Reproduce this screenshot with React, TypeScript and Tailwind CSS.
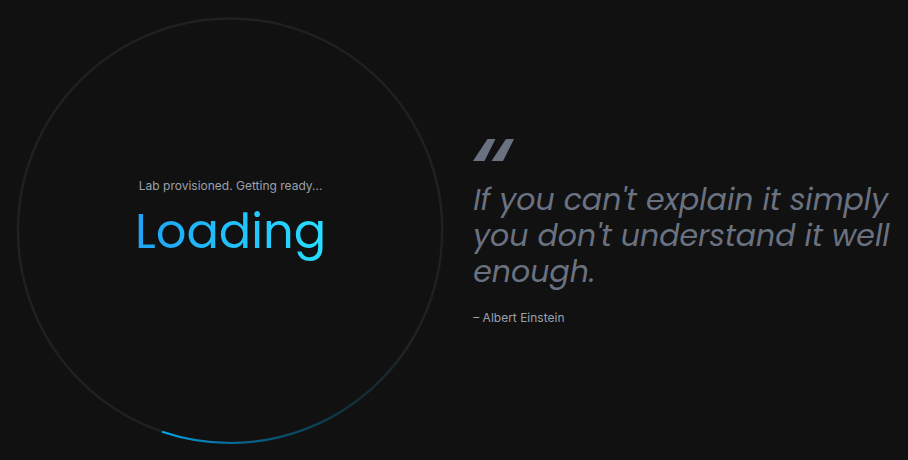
function ProgressRing() {
  return (
    <svg viewBox="0 0 429 429" fill="none" aria-hidden="true" className="col-start-1 row-start-1 w-full overflow-visible">
      <defs>
        <linearGradient id="arc" gradientUnits="userSpaceOnUse" x1="146" y1="0" x2="400" y2="0">
          <stop offset="0" stopColor="#04a4ea" />
          <stop offset="0.26" stopColor="#036f9e" />
          <stop offset="0.55" stopColor="#074862" />
          <stop offset="0.76" stopColor="#0d303c" />
          <stop offset="1" stopColor="#202122" />
        </linearGradient>
      </defs>
      <circle cx="214" cy="215.5" r="212" stroke="#202020" strokeWidth="2.5" />
      <path d="M146 416.5 A212 212 0 0 0 400 317.5" stroke="url(#arc)" strokeWidth="2" />
    </svg>
  );
}

export default function App() {
  return (
    <main className="flex min-h-screen items-center gap-7 bg-[#111111] px-4 font-['Inter',sans-serif]">
      <section role="status" className="grid w-[49%] shrink-0 place-items-center">
        <ProgressRing />
        <div className="col-start-1 row-start-1 flex flex-col items-center gap-2 pb-5 text-center">
          <p className="text-xs text-gray-400">Lab provisioned. Getting ready...</p>
          <h1 className="bg-linear-to-r from-[#1fa2f5] to-[#28deff] bg-clip-text font-['Poppins','Inter',sans-serif] text-5xl/[60px] text-transparent">
            Loading
          </h1>
        </div>
      </section>
      <figure className="min-w-0 flex-1 pt-1">
        <svg viewBox="0 0 41 22" aria-hidden="true" className="w-[41px] fill-gray-500">
          <path d="M14.5 0H22.5L11.5 22H0Z M33 0H41L30 22H18.5Z" />
        </svg>
        <blockquote className="mt-[21px] font-['Poppins','Inter',sans-serif] text-3xl/9 text-gray-500 italic">
          If you can't explain it simply you don't understand it well enough.
        </blockquote>
        <figcaption className="mt-5 text-xs text-gray-400">– Albert Einstein</figcaption>
      </figure>
    </main>
  );
}
